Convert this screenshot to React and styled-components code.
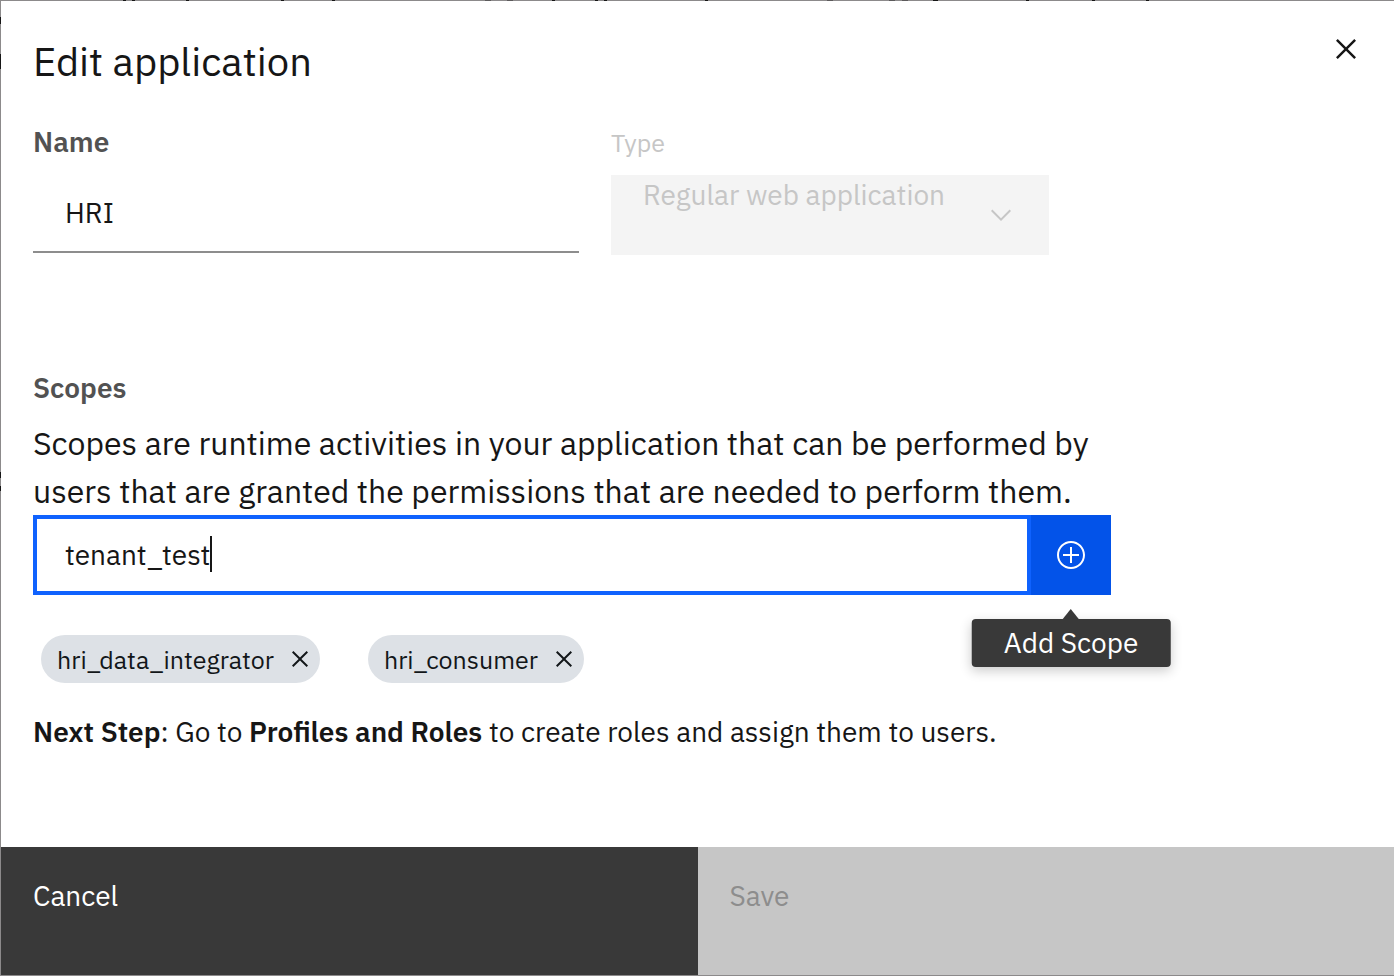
import React, { useState } from "react";
import styled, { createGlobalStyle, css } from "styled-components";

const font = '"IBM Plex Sans", "Noto Sans", "Open Sans", sans-serif';

const GlobalStyle = createGlobalStyle`
  *, *::before, *::after { box-sizing: border-box; }
  body { margin: 0; background: #8c8a8b; color: #161616; font-family: ${font}; }
  button, input, select { font-family: inherit; color: inherit; margin: 0; }
`;

const speck = (x, y, w, h, color) =>
  `linear-gradient(${color}, ${color}) ${x}px ${y}px / ${w}px ${h}px no-repeat`;

const topSpecks = [
  123, 132, 186, 281, 332, 552, 595, 604, 705, 1026, 1092, 1146,
].map((x) => speck(x, 0, 3, 1, "#161616"));
const wideSpecks = [485, 507, 827, 889, 902].map((x) => speck(x, 0, 6, 1, "#5c5a5b"));
const leftSpecks = [
  [17, 7],
  [54, 15],
  [472, 6],
  [486, 5],
].map(([y, h]) => speck(0, y, 1, h, "#161616"));

/* The dimmed page shows as a hairline round the dialog. */
const Backdrop = styled.div`
  display: flex;
  min-height: 100vh;
  padding: 1px 0 1px 1px;
  background: ${[...topSpecks, speck(933, 0, 5, 1, "#161616"), ...wideSpecks, ...leftSpecks].join(", ")},
    #8c8a8b;
`;

const Dialog = styled.form`
  flex: 1;
  min-width: 0;
  display: flex;
  flex-direction: column;
  background: #fff;
`;

const Header = styled.header`
  display: flex;
  justify-content: space-between;
  align-items: flex-start;
  padding: 0 20px 0 32px;
`;

const Title = styled.h1`
  margin: 0;
  padding-top: 34px;
  font-size: 40px;
  line-height: 52px;
  font-weight: 400;
`;

const IconButton = styled.button`
  display: grid;
  place-items: center;
  flex: none;
  padding: 0;
  border: 0;
  background: transparent;
  cursor: pointer;
  ${(p) =>
    p.$size === "large" &&
    css`
      width: 56px;
      height: 56px;
      margin-top: 20px;
    `}
`;

const Content = styled.div`
  flex: 1;
  padding: 36px 32px 64px;
`;

const Fields = styled.div`
  display: grid;
  grid-template-columns: 546fr 438fr;
  gap: 32px;
  align-items: start;
  max-width: 1016px;
`;

const Field = styled.div`
  display: flex;
  flex-direction: column;
  gap: 12px;
`;

const Label = styled.label`
  font-size: 28px;
  line-height: 38px;
  font-weight: 600;
  color: #525252;
`;

const SmallLabel = styled.label`
  font-size: 25px;
  line-height: 40px;
  color: #c6c6c6;
`;

const TextInput = styled.input`
  width: 100%;
  height: 80px;
  padding: 0 32px;
  border: 0;
  border-bottom: 2px solid #8d8d8d;
  background: #fff;
  font-size: 28px;
  outline: none;
`;

const SelectBox = styled.div`
  position: relative;
  color: #c6c6c6;
`;

const Select = styled.select`
  appearance: none;
  display: block;
  width: 100%;
  height: 80px;
  padding: 0 80px 42px 32px;
  border: 0;
  border-radius: 0;
  background: #f4f4f4;
  font-size: 28px;
  opacity: 1;
  &:disabled { color: #c6c6c6; opacity: 1; }
`;

const Chevron = styled.svg`
  position: absolute;
  right: 32px;
  top: 24px;
  pointer-events: none;
`;

const Scopes = styled.section`
  display: flex;
  flex-direction: column;
  max-width: 1078px;
  margin-top: 114px;
`;

const Description = styled.p`
  margin: 12px 0 0;
  font-size: 32px;
  line-height: 48px;
`;

const ScopeRow = styled.div`
  display: flex;
  height: 80px;
`;

const FocusedField = styled.label`
  flex: 1;
  min-width: 0;
  display: flex;
  align-items: center;
  padding: 0 28px 2px;
  border: 4px solid #0f62fe;
  cursor: text;
`;

const ScopeInput = styled.input`
  field-sizing: content;
  max-width: 100%;
  height: 40px;
  padding: 0;
  border: 0;
  outline: none;
  background: transparent;
  caret-color: transparent;
  font-size: 28px;
`;

const Caret = styled.span`
  flex: none;
  width: 2px;
  height: 36px;
  background: #161616;
`;

const AddBox = styled.div`
  position: relative;
  flex: none;
`;

const AddButton = styled.button`
  display: grid;
  place-items: center;
  width: 80px;
  height: 80px;
  padding: 0;
  border: 0;
  background: #0353e9;
  && { color: #fff; }
  cursor: pointer;
`;

const Tooltip = styled.span`
  position: absolute;
  top: 104px;
  left: 50%;
  transform: translateX(-50%);
  padding: 0 32px;
  border-radius: 4px;
  background: #393939;
  color: #fff;
  font-size: 28px;
  line-height: 48px;
  white-space: nowrap;
  box-shadow: 0 4px 12px rgba(0, 0, 0, 0.2);
  &::before {
    content: "";
    position: absolute;
    bottom: 100%;
    left: 50%;
    margin-left: -8px;
    border: solid transparent;
    border-width: 0 8px 10px;
    border-bottom-color: #393939;
  }
`;

const Tags = styled.ul`
  display: flex;
  gap: 48px;
  margin: 40px 0 0;
  padding: 0 8px;
  list-style: none;
`;

const Tag = styled.li`
  display: flex;
  align-items: center;
  gap: 10px;
  height: 48px;
  padding: 0 4px 0 16px;
  border-radius: 24px;
  background: #dde1e6;
  color: #121619;
  font-size: 25px;
`;

const NextStep = styled.p`
  margin: 30px 0 0;
  font-size: 28px;
  line-height: 38px;
`;

const Strong = styled.strong`
  font-weight: 600;
`;

const Footer = styled.footer`
  display: grid;
  grid-template-columns: 1fr 1fr;
`;

const FooterButton = styled.button`
  display: flex;
  align-items: flex-start;
  height: 128px;
  padding: 30px 32px;
  border: 0;
  background: ${(p) => (p.disabled ? "#c6c6c6" : "#393939")};
  && { color: ${(p) => (p.disabled ? "#8d8d8d" : "#fff")}; }
  font-size: 28px;
  line-height: 38px;
  text-align: left;
`;

const CloseIcon = ({ size }) => (
  <svg width={size} height={size} viewBox="0 0 32 32" fill="currentColor" aria-hidden="true">
    <path d="M24 9.4L22.6 8 16 14.6 9.4 8 8 9.4 14.6 16 8 22.6 9.4 24 16 17.4 22.6 24 24 22.6 17.4 16 24 9.4z" />
  </svg>
);

const AddIcon = () => (
  <svg width="32" height="32" viewBox="0 0 32 32" fill="currentColor" aria-hidden="true">
    <path d="M16 4c6.6 0 12 5.4 12 12s-5.4 12-12 12S4 22.6 4 16 9.4 4 16 4m0-2C8.3 2 2 8.3 2 16s6.3 14 14 14 14-6.3 14-14S23.7 2 16 2z" />
    <path d="M24 15L17 15 17 8 15 8 15 15 8 15 8 17 15 17 15 24 17 24 17 17 24 17z" />
  </svg>
);

export default function App() {
  const [name, setName] = useState("HRI");
  const [scope, setScope] = useState("tenant_test");
  const [scopes, setScopes] = useState(["hri_data_integrator", "hri_consumer"]);

  const addScope = () => {
    if (!scope) return;
    setScopes([...scopes, scope]);
    setScope("");
  };

  return (
    <Backdrop>
      <GlobalStyle />
      <Dialog role="dialog" aria-labelledby="title" onSubmit={(e) => e.preventDefault()}>
        <Header>
          <Title id="title">Edit application</Title>
          <IconButton type="button" $size="large" aria-label="Close">
            <CloseIcon size={40} />
          </IconButton>
        </Header>
        <Content>
          <Fields>
            <Field>
              <Label htmlFor="name">Name</Label>
              <TextInput id="name" value={name} onChange={(e) => setName(e.target.value)} />
            </Field>
            <Field>
              <SmallLabel htmlFor="type">Type</SmallLabel>
              <SelectBox>
                <Select id="type" disabled defaultValue="web">
                  <option value="web">Regular web application</option>
                </Select>
                <Chevron width="32" height="32" viewBox="0 0 16 16" fill="currentColor" aria-hidden="true">
                  <path d="M8 11L3 6 3.7 5.3 8 9.6 12.3 5.3 13 6z" />
                </Chevron>
              </SelectBox>
            </Field>
          </Fields>
          <Scopes>
            <Label htmlFor="scope">Scopes</Label>
            <Description>
              Scopes are runtime activities in your application that can be performed by users
              that are granted the permissions that are needed to perform them.
            </Description>
            <ScopeRow>
              <FocusedField htmlFor="scope">
                <ScopeInput id="scope" value={scope} onChange={(e) => setScope(e.target.value)} />
                <Caret />
              </FocusedField>
              <AddBox>
                <AddButton type="button" aria-labelledby="add-tip" onClick={addScope}>
                  <AddIcon />
                </AddButton>
                <Tooltip id="add-tip" role="tooltip">Add Scope</Tooltip>
              </AddBox>
            </ScopeRow>
          </Scopes>
          <Tags>
            {scopes.map((s) => (
              <Tag key={s}>
                {s}
                <IconButton
                  type="button"
                  aria-label={`Remove ${s}`}
                  onClick={() => setScopes(scopes.filter((o) => o !== s))}
                >
                  <CloseIcon size={32} />
                </IconButton>
              </Tag>
            ))}
          </Tags>
          <NextStep>
            <Strong>Next Step</Strong>: Go to <Strong>Profiles and Roles</Strong> to create roles
            and assign them to users.
          </NextStep>
        </Content>
        <Footer>
          <FooterButton type="button">Cancel</FooterButton>
          <FooterButton type="submit" disabled>Save</FooterButton>
        </Footer>
      </Dialog>
    </Backdrop>
  );
}
